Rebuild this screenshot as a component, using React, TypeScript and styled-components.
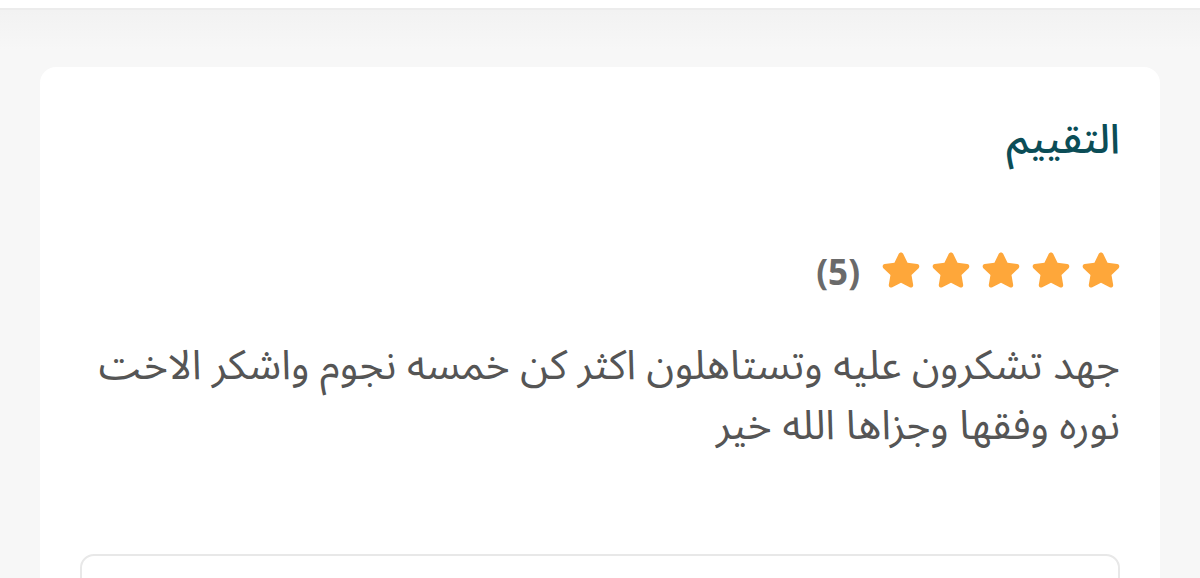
import { createGlobalStyle, styled } from "styled-components"

const GlobalStyle = createGlobalStyle`
  html, body {
    margin: 0;
    padding: 0;
    background: #f6f6f6;
    font-family: "Noto Sans Arabic", "DejaVu Sans", "Noto Sans", sans-serif;
    overflow: hidden;
  }
`

function Star (): JSX.Element {
  return (
    <svg width="38" height="38" viewBox="2.4 2.4 19.2 19.2">
      <path
        d="M12 2.6c.5 0 .9.3 1.1.7l2.2 4.5 4.9.7c1 .15 1.4 1.35.7 2.05l-3.6 3.5.85 4.9c.17 1-.87 1.75-1.77 1.28L12 17.9l-4.4 2.33c-.9.47-1.94-.28-1.77-1.28l.85-4.9-3.6-3.5c-.7-.7-.3-1.9.7-2.05l4.9-.7 2.2-4.5c.2-.4.6-.7 1.1-.7z"
        fill="#fea73a"
      />
    </svg>
  )
}

function App (): JSX.Element {
  const rating = 5
  return (
    <>
      <GlobalStyle />
      <TopBar />
      <Page>
        <Card dir="rtl">
          <Title>التقييم</Title>
          <RatingRow>
            <Stars>
              {Array.from({ length: rating }).map((_, i) => (
                <Star key={i} />
              ))}
            </Stars>
            <Count dir="ltr">({rating})</Count>
          </RatingRow>
          <ReviewText>
            جهد تشكرون عليه وتستاهلون اكثر كن خمسه نجوم واشكر الاخت نوره وفقها وجزاها الله خير
          </ReviewText>
          <InnerBox />
        </Card>
      </Page>
    </>
  )
}

export default App

const TopBar = styled.div`
  height: 8px;
  background: #ffffff;
  border-bottom: 2px solid #ececec;
`

const Page = styled.div`
  height: 568px;
  padding: 57px 40px 0;
  background: linear-gradient(to bottom, #f2f2f2, #f7f7f7 40px);
  box-sizing: border-box;
  overflow: hidden;
`

const Card = styled.div`
  background: #ffffff;
  border-radius: 16px;
  padding: 45px 40px 0;
  height: 600px;
  box-sizing: border-box;
`

const Title = styled.h2`
  margin: 0;
  font-size: 41px;
  font-weight: 500;
  color: #0b4d57;
  line-height: 56px;
`

const RatingRow = styled.div`
  display: flex;
  align-items: center;
  gap: 22px;
  margin-top: 83px;
  height: 40px;
`

const Stars = styled.div`
  display: flex;
  gap: 12px;
`

const Count = styled.span`
  font-family: "Open Sans", sans-serif;
  font-size: 35px;
  font-weight: 700;
  color: #6a6a6a;
`

const ReviewText = styled.p`
  margin: 45px 0 0;
  font-size: 41px;
  line-height: 60px;
  color: #555555;
  max-width: 1030px;
`

const InnerBox = styled.div`
  margin-top: 98px;
  height: 120px;
  border: 2px solid #e8e8e8;
  border-radius: 14px;
`
